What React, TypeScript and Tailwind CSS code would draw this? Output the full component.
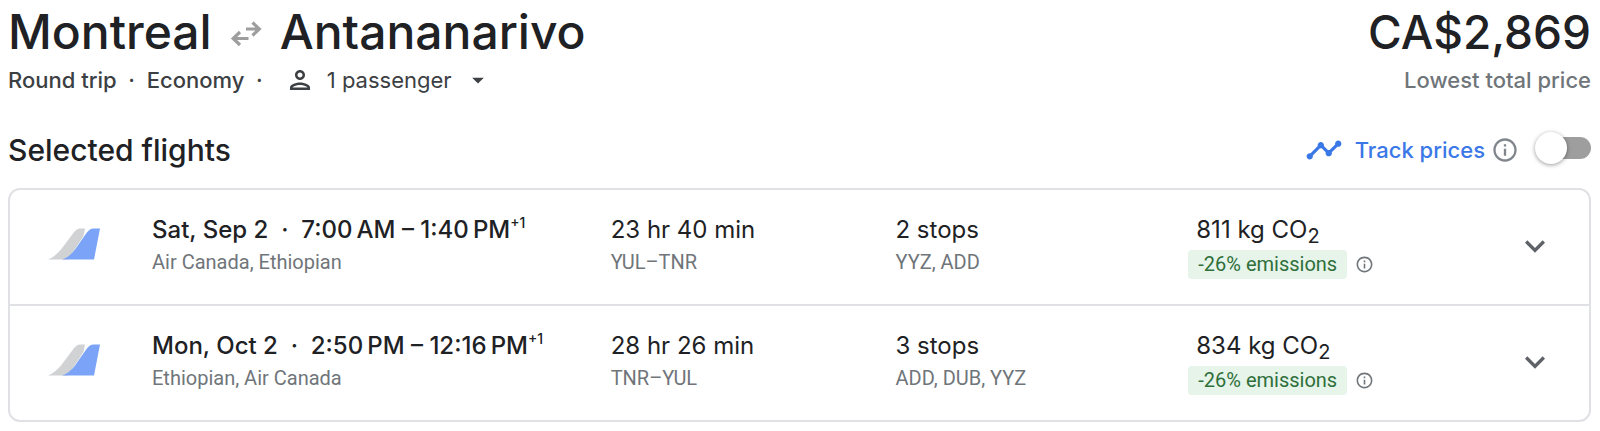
import { MdArrowDropDown, MdExpandMore, MdInfoOutline, MdOutlinePerson, MdTimeline } from "react-icons/md";

type Flight = {
  date: string;
  times: string;
  airlines: string;
  duration: string;
  route: string;
  stops: string;
  via: string;
  co2: string;
  emissions: string;
};

const flights: Flight[] = [
  {
    date: "Sat, Sep 2",
    times: "7:00\u2009AM – 1:40\u2009PM",
    airlines: "Air Canada, Ethiopian",
    duration: "23 hr 40 min",
    route: "YUL–TNR",
    stops: "2 stops",
    via: "YYZ, ADD",
    co2: "811 kg CO",
    emissions: "-26% emissions",
  },
  {
    date: "Mon, Oct 2",
    times: "2:50\u2009PM – 12:16\u2009PM",
    airlines: "Ethiopian, Air Canada",
    duration: "28 hr 26 min",
    route: "TNR–YUL",
    stops: "3 stops",
    via: "ADD, DUB, YYZ",
    co2: "834 kg CO",
    emissions: "-26% emissions",
  },
];

function RoundTripIcon() {
  return (
    <svg viewBox="0 0 32 26" className="mt-1 h-[26px] w-8 shrink-0" fill="none" stroke="#9e9e9e" strokeWidth="3.2" aria-hidden="true">
      <path d="M16 8H29M22.500 1.500L29.300 8L22.500 14.500" />
      <path d="M18.500 17.500H4M10 11L3.200 17.500L10 24" />
    </svg>
  );
}

function AirlineTails() {
  return (
    <svg viewBox="0 0 52 32" className="h-8 w-[52px]" aria-hidden="true">
      <path d="M0 31.500C5 29.500 9 26 13 21.500L25 5.500C27.500 2 29.500 .5 32 .5H37L35.500 8L20 31.500Z" fill="#d0d2d4" />
      <path d="M14 31.500C20 29.500 23.500 26 27 21.500L38.500 5C41 1.800 43 .5 45.500 .5H52L46 31.500Z" fill="#7ba3f7" />
    </svg>
  );
}

function FlightRow({ flight }: { flight: Flight }) {
  return (
    <li className="flex items-center pt-6 pb-[25px] pl-[38px]">
      <div className="w-[104px] shrink-0 pb-1.5">
        <AirlineTails />
      </div>
      <div className="grid flex-1 grid-cols-[459fr_285fr_293fr_401fr]">
        <div>
          <p className="text-2xl leading-8 font-medium whitespace-pre">
            {flight.date}
            {"  ·  "}
            {flight.times}
            <sup className="-top-2.5 text-sm leading-none">+1</sup>
          </p>
          <p className="font-[Roboto,sans-serif] text-xl leading-8 text-[#70757a]">{flight.airlines}</p>
        </div>
        <div>
          <p className="text-2xl leading-8">{flight.duration}</p>
          <p className="font-[Roboto,sans-serif] text-xl leading-8 text-[#70757a]">{flight.route}</p>
        </div>
        <div>
          <p className="text-2xl leading-8">{flight.stops}</p>
          <p className="font-[Roboto,sans-serif] text-xl leading-8 text-[#70757a]">{flight.via}</p>
        </div>
        <div className="flex items-center justify-between pr-[34px]">
          <div>
            <p className="pl-2 text-2xl leading-8">
              {flight.co2}
              <sub className="text-xl leading-none">2</sub>
            </p>
            <div className="flex items-center gap-2 pt-1">
              <span className="rounded bg-[#e6f4ea] px-2.5 font-[Roboto,sans-serif] text-xl leading-[29px] text-[#2f6f3a]">
                {flight.emissions}
              </span>
              <button type="button" aria-label="About emissions" className="text-[#70757a]">
                <MdInfoOutline className="size-[19px]" />
              </button>
            </div>
          </div>
          <button type="button" aria-label="Flight details" className="pb-0.5 text-[#5f6368]">
            <MdExpandMore className="size-10" />
          </button>
        </div>
      </div>
    </li>
  );
}

export default function App() {
  return (
    <main className="bg-white pr-[9px] pb-2 pl-2 font-[Inter,sans-serif] text-[#202124]">
      <header className="flex justify-between">
        <div>
          <h1 className="flex items-center gap-[18px] text-5xl leading-[64px] font-medium">
            Montreal
            <RoundTripIcon />
            Antananarivo
          </h1>
          <div className="flex items-center text-[22px] leading-8 text-[#3c4043]">
            <span className="font-medium whitespace-pre">{"Round trip  ·  Economy  ·"}</span>
            <label className="ml-[22px] flex items-center">
              <MdOutlinePerson className="size-[30px]" />
              <select aria-label="Passengers" className="ml-3 appearance-none field-sizing-content bg-transparent">
                <option>1 passenger</option>
              </select>
              <MdArrowDropDown className="ml-3 size-[28px]" />
            </label>
          </div>
        </div>
        <div className="text-right">
          <p className="text-[46px] leading-[64px] font-medium">CA$2,869</p>
          <p className="text-[22px] leading-8 font-medium text-[#70757a]">Lowest total price</p>
        </div>
      </header>

      <section>
        <div className="flex items-center justify-between pt-[34px] pb-[18px]">
          <h2 className="text-3xl leading-10 font-medium">Selected flights</h2>
          <div className="flex items-center">
            <MdTimeline className="size-[38px] text-[#3b78e7]" />
            <label htmlFor="track" className="ml-3 text-[22px] leading-8 font-medium text-[#3b78e7]">
              Track prices
            </label>
            <button type="button" aria-label="About price tracking" className="ml-1.5 text-[#80868b]">
              <MdInfoOutline className="size-7" />
            </button>
            <input
              id="track"
              type="checkbox"
              role="switch"
              className="mb-1 ml-4 flex h-[22px] w-14 appearance-none items-center rounded-full bg-linear-to-r from-transparent from-20% to-[#9e9e9e] to-20% before:size-8 before:rounded-full before:bg-white before:shadow-[0_1px_4px_rgba(0,0,0,0.4)] checked:justify-end"
            />
          </div>
        </div>
        <ul className="divide-y-2 divide-[#e0e1e5] rounded-xl border-2 border-[#e0e1e5]">
          {flights.map((flight) => (
            <FlightRow key={flight.date} flight={flight} />
          ))}
        </ul>
      </section>
    </main>
  );
}
